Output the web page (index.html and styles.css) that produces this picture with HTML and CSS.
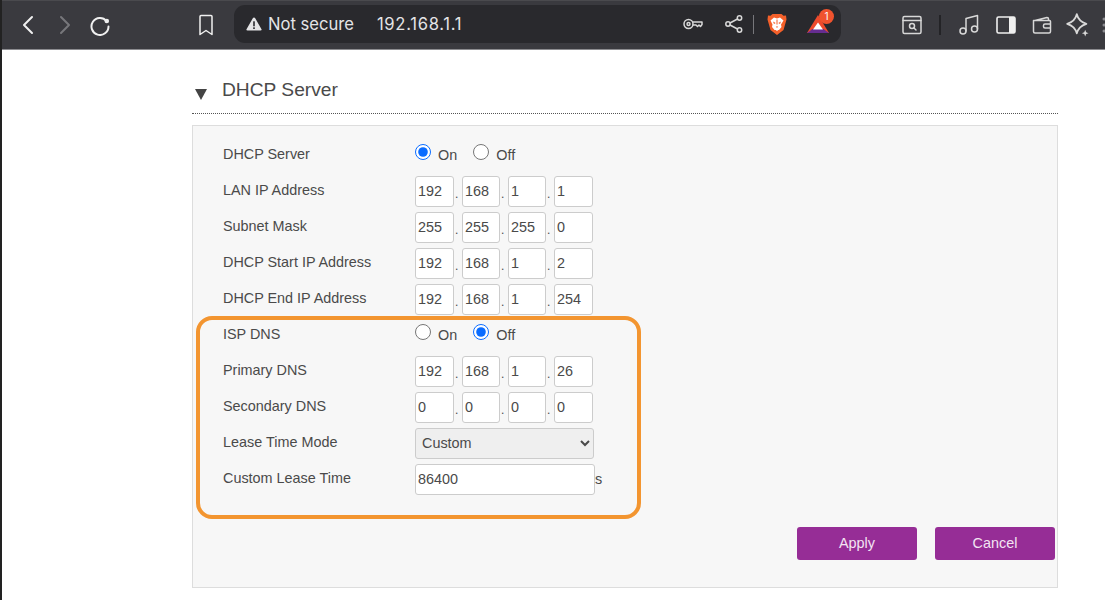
FILE: index.html
```html
<!DOCTYPE html>
<html lang="en">
<head>
  <meta charset="UTF-8">
  <title>DHCP Server</title>
  <link rel="stylesheet" href="styles.css">
</head>
<body>

  <header class="toolbar">
    <div class="nav-btns">
      <svg class="ic back" width="14" height="20" viewBox="0 0 14 20"><path d="M11 2 3 10l8 8"/></svg>
      <svg class="ic forward" width="14" height="20" viewBox="0 0 14 20"><path d="m3 2 8 8-8 8"/></svg>
      <svg class="ic reload" width="22" height="22" viewBox="0 0 22 22"><path d="M17.500 7A8.500 8.500 0 1 0 19.500 12.500"/><circle class="dot" cx="17.800" cy="7" r="2.300"/></svg>
    </div>
    <svg class="ic bookmark" width="16" height="22" viewBox="0 0 16 22"><path d="M2 2.500q0-1 1-1h10q1 0 1 1v18l-6-4-6 4z"/></svg>
    <div class="address">
      <svg class="warn" width="16" height="14" viewBox="0 0 16 14"><path d="M8 .5q.8 0 1.200.7l6.300 11q.5 1.300-1 1.300H1.500q-1.500 0-1-1.300l6.300-11Q7.200.5 8 .5z"/><rect class="warn-mark" x="7.200" y="4.300" width="1.600" height="5"/><rect class="warn-mark" x="7.200" y="10.300" width="1.600" height="1.700"/></svg>
      <span class="not-secure">Not secure</span>
      <span class="url">192.168.1.1</span>
      <div class="address-end">
        <svg class="ic thin" width="20" height="12" viewBox="0 0 20 12"><circle cx="5.500" cy="6" r="4.500"/><circle cx="5.500" cy="6" r="1.500"/><path d="M10 4h9v2.500l-1.500 2-1.500-1.500-1.500 1.500-1.500-1.500h-3"/></svg>
        <svg class="ic thin share" width="18" height="18" viewBox="0 0 18 18"><circle cx="3" cy="9" r="2.200"/><circle cx="14.500" cy="3" r="2.200"/><circle cx="14.500" cy="15" r="2.200"/><path d="m5 8 7.500-4M5 10l7.500 4"/></svg>
        <span class="divider"></span>
        <svg class="brave" width="20" height="23" viewBox="0 0 20 23"><path class="brave-shield" d="M5.500 1h9l2 1.800L19 2.500l.5 4-1 3.500-2 7-6.500 5-6.500-5-2-7-1-3.500.5-4 2.500.3z"/><path class="brave-face" d="M3.500 7.500 7 4.500l3 1 3-1 3.500 3-2.500 4 .5 2.500-2.500 3H11l-1 1.200-1-1.200H7.500L5 14l.5-2.500z"/><path class="brave-shield" d="M6 8.500 8.700 10 7 11zM14 8.500 11.300 10 13 11zM8.800 13.500h2.400L10 15zM9.500 6.500h1v5h-1z"/></svg>
        <div class="rewards">
          <svg width="24" height="20" viewBox="0 0 24 20"><path class="bat-a" d="M12 1 1 19h22z"/><path class="bat-b" d="M1 19l5.500-4h11l5.500 4z"/><path class="bat-c" d="M12 8.500 7 15.500h10z"/></svg>
          <span class="badge">1</span>
        </div>
      </div>
    </div>
    <div class="tools">
      <svg class="ic thin" width="20" height="20" viewBox="0 0 20 20"><rect x="1" y="1.500" width="18" height="17" rx="1.500"/><path d="M1 5.500h18"/><circle cx="10" cy="11" r="2.500"/><path d="m12 13 2 2"/></svg>
      <span class="divider dark"></span>
      <svg class="ic thin" width="21" height="21" viewBox="0 0 21 21"><circle cx="4" cy="17" r="3"/><circle cx="15.500" cy="15" r="3"/><path d="M7 17V4.500L18.500 1.500V15"/></svg>
      <svg class="panel-ic" width="20" height="18" viewBox="0 0 20 18"><rect class="panel-frame" x="1" y="1" width="18" height="16" rx="1.500"/><path class="panel-fill" d="M13 1h4.500q1.500 0 1.500 1.500v13q0 1.500-1.500 1.500H13z"/></svg>
      <svg class="ic thin" width="20" height="18" viewBox="0 0 20 18"><path d="M3 4.500 15 1.500q1.500 0 1.500 1.500V4.500M1.500 4.500h16q1 0 1 1v10q0 1.500-1.500 1.500H3q-1.500 0-1.500-1.500zM18.500 8H13q-1.500 0-1.500 1.500v1q0 1.500 1.500 1.500h5.500"/></svg>
      <svg class="ic thin star" width="24" height="24" viewBox="1 .5 20 20"><path d="M10 1.500q1.500 6 8 8-6.500 2-8 8-1.500-6-8-8 6.500-2 8-8z"/><path class="spark" d="M17 14.500l.8 2 2 .8-2 .8-.8 2-.8-2-2-.8 2-.8z"/></svg>
      <svg class="more" width="4" height="16" viewBox="0 0 4 16"><circle cx="2" cy="2" r="1.500"/><circle cx="2" cy="8" r="1.500"/><circle cx="2" cy="14" r="1.500"/></svg>
    </div>
  </header>

  <main class="page">
    <h2 class="section-title"><span class="arrow"></span>DHCP Server</h2>

    <form class="panel">
      <div class="row">
        <label>DHCP Server</label>
        <div class="radios">
          <input type="radio" name="dhcp" checked><span>On</span>
          <input type="radio" name="dhcp"><span>Off</span>
        </div>
      </div>
      <div class="row">
        <label>LAN IP Address</label>
        <div class="ip">
          <input value="192"><i>.</i><input value="168"><i>.</i><input value="1"><i>.</i><input value="1">
        </div>
      </div>
      <div class="row">
        <label>Subnet Mask</label>
        <div class="ip">
          <input value="255"><i>.</i><input value="255"><i>.</i><input value="255"><i>.</i><input value="0">
        </div>
      </div>
      <div class="row">
        <label>DHCP Start IP Address</label>
        <div class="ip">
          <input value="192"><i>.</i><input value="168"><i>.</i><input value="1"><i>.</i><input value="2">
        </div>
      </div>
      <div class="row">
        <label>DHCP End IP Address</label>
        <div class="ip">
          <input value="192"><i>.</i><input value="168"><i>.</i><input value="1"><i>.</i><input value="254">
        </div>
      </div>
      <div class="row">
        <label>ISP DNS</label>
        <div class="radios">
          <input type="radio" name="isp"><span>On</span>
          <input type="radio" name="isp" checked><span>Off</span>
        </div>
      </div>
      <div class="row">
        <label>Primary DNS</label>
        <div class="ip">
          <input value="192"><i>.</i><input value="168"><i>.</i><input value="1"><i>.</i><input value="26">
        </div>
      </div>
      <div class="row">
        <label>Secondary DNS</label>
        <div class="ip">
          <input value="0"><i>.</i><input value="0"><i>.</i><input value="0"><i>.</i><input value="0">
        </div>
      </div>
      <div class="row">
        <label>Lease Time Mode</label>
        <select class="wide-select"><option>Custom</option></select>
      </div>
      <div class="row">
        <label>Custom Lease Time</label>
        <input class="wide-input" value="86400"><span class="unit">s</span>
      </div>

      <div class="actions">
        <button type="button" class="btn">Apply</button>
        <button type="button" class="btn">Cancel</button>
      </div>

      <div class="highlight"></div>
    </form>
  </main>

</body>
</html>
```

FILE: styles.css
```css
body {
  font-family: "Liberation Sans", Arial, sans-serif;
  margin: 0;
  padding: 0;
  background: #fff;
  color: #4a4a4a;
  border-left: 2px solid #222;
  height: 600px;
  box-sizing: border-box;
  overflow: hidden;
}

/* browser chrome */
.toolbar {
  height: 50px;
  box-sizing: border-box;
  background: #3a3a3f;
  border-top: 1px solid #4a4a4e;
  border-bottom: 1px solid #8c8c90;
  display: flex;
  align-items: center;
  padding: 0 0 1px 19px;
}
.ic {
  fill: none;
  stroke: #f0f0f0;
  stroke-width: 2;
  stroke-linecap: round;
  stroke-linejoin: round;
  flex: none;
}
.ic.thin {
  stroke-width: 1.5;
  stroke: #d8d8d8;
}
.ic .dot {
  fill: #f0f0f0;
  stroke: none;
}
.ic .spark {
  fill: #d8d8d8;
  stroke: none;
}
.ic.forward {
  stroke: #77777b;
}
.nav-btns {
  display: flex;
  align-items: center;
  gap: 23px;
  width: 177px;
  flex: none;
}
.ic.reload {
  margin-left: -6px;
}
.ic.bookmark {
  stroke-width: 1.5;
}
.address {
  margin: -1px 0 0 20px;
  width: 607px;
  height: 38px;
  flex: none;
  background: #29292d;
  border-radius: 11px;
  display: flex;
  align-items: center;
  padding-left: 12px;
  box-sizing: border-box;
  font-family: Inter, sans-serif;
  font-size: 16.6px;
  color: #e4e4e6;
}
.warn {
  fill: #e4e4e6;
  margin-right: 6px;
}
.warn-mark {
  fill: #29292d;
}
.url {
  margin-left: 23px;
  letter-spacing: 0.7px;
}
.address-end {
  margin-left: auto;
  display: flex;
  align-items: center;
  margin-right: 11px;
}
.share {
  margin-left: 22px;
}
.divider {
  width: 1px;
  height: 19px;
  background: #77777b;
  margin: 0 13px 0 10px;
}
.divider.dark {
  width: 2px;
  height: 20px;
  background: #232326;
  margin: 0 2px 0 1px;
}
.brave-shield {
  fill: #f4602a;
}
.brave-face {
  fill: #fff;
}
.rewards {
  position: relative;
  margin-left: 19px;
  width: 24px;
  height: 24px;
  display: flex;
  align-items: center;
}
.bat-a {
  fill: #ee4a2c;
}
.bat-b {
  fill: #662d91;
}
.bat-c {
  fill: #fff;
}
.badge {
  position: absolute;
  top: -3px;
  left: 13px;
  width: 15px;
  height: 15px;
  border-radius: 50%;
  background: #f0532e;
  color: #fff;
  font-size: 10px;
  line-height: 15px;
  text-align: center;
}
.tools {
  display: flex;
  align-items: center;
  flex: none;
  margin-left: 61px;
  gap: 16px;
}
.panel-ic {
  flex: none;
}
.panel-frame {
  fill: none;
  stroke: #f0f0f0;
  stroke-width: 1.6;
}
.panel-fill {
  fill: #f0f0f0;
}
.ic.star {
  margin: 0 -4px 0 -2px;
}
.more {
  fill: #8a8a8e;
  flex: none;
}

/* page */
.page {
  width: 866px;
  margin-left: 190px;
}
.section-title {
  margin: 0;
  height: 64px;
  box-sizing: border-box;
  padding-top: 29px;
  font-size: 19.2px;
  font-weight: normal;
  line-height: 22px;
  display: flex;
  border-bottom: 1px dotted #555;
}
.arrow {
  width: 0;
  height: 0;
  border-left: 6.5px solid transparent;
  border-right: 6.5px solid transparent;
  border-top: 11px solid #444;
  margin: 10px 15px 0 3px;
}
.panel {
  position: relative;
  margin-top: 11px;
  height: 463px;
  box-sizing: border-box;
  background: #f7f7f7;
  border: 1px solid #ddd;
  padding: 11px 0 0 30px;
  font-size: 14.4px;
}
.row {
  display: flex;
  align-items: center;
  height: 36px;
}
.row label {
  width: 192px;
  flex: none;
  margin-top: -2px;
}
.radios {
  display: flex;
  align-items: center;
}
.radios input {
  margin: 0;
  width: 16px;
  height: 16px;
  accent-color: #0a6cff;
  position: relative;
  top: -3px;
}
.radios span {
  margin: 0 16px 0 7px;
}
.ip {
  display: flex;
  align-items: center;
}
.ip input {
  width: 39px;
}
.ip input:nth-of-type(2) {
  width: 38px;
}
.ip input:nth-of-type(3) {
  width: 38px;
}
.ip i {
  width: 8px;
  padding-left: 1px;
  box-sizing: border-box;
  font-style: normal;
  position: relative;
  top: 3px;
  font-size: 12px;
}
.row input:not([type=radio]) {
  height: 31px;
  box-sizing: border-box;
  margin: 0;
  padding: 0 2px;
  font: 14.4px "Liberation Sans", Arial, sans-serif;
  color: #4a4a4a;
  background: #fff;
  border: 1px solid #ccc;
  border-radius: 3px;
  outline: none;
  flex: none;
}
.row .wide-input {
  width: 180px;
}
.wide-select {
  width: 179px;
  height: 31px;
  box-sizing: border-box;
  font: 14.4px "Liberation Sans", Arial, sans-serif;
  color: #4a4a4a;
  background: #efefef;
  border: 1px solid #ccc;
  border-radius: 3px;
  padding: 0 0 0 2px;
}
.unit {
  margin-top: -1px;
}
.actions {
  display: flex;
  justify-content: flex-end;
  gap: 18px;
  margin-top: 30px;
  padding-right: 2px;
}
.btn {
  width: 120px;
  height: 33px;
  background: #962d96;
  color: #f3e4f3;
  border: none;
  border-radius: 3px;
  font: 14.4px "Liberation Sans", Arial, sans-serif;
  padding: 0 0 1px;
  cursor: pointer;
}
.highlight {
  position: absolute;
  left: 3px;
  top: 190px;
  width: 445px;
  height: 203px;
  box-sizing: border-box;
  border: 4px solid #f39530;
  border-radius: 16px;
  pointer-events: none;
}
```
